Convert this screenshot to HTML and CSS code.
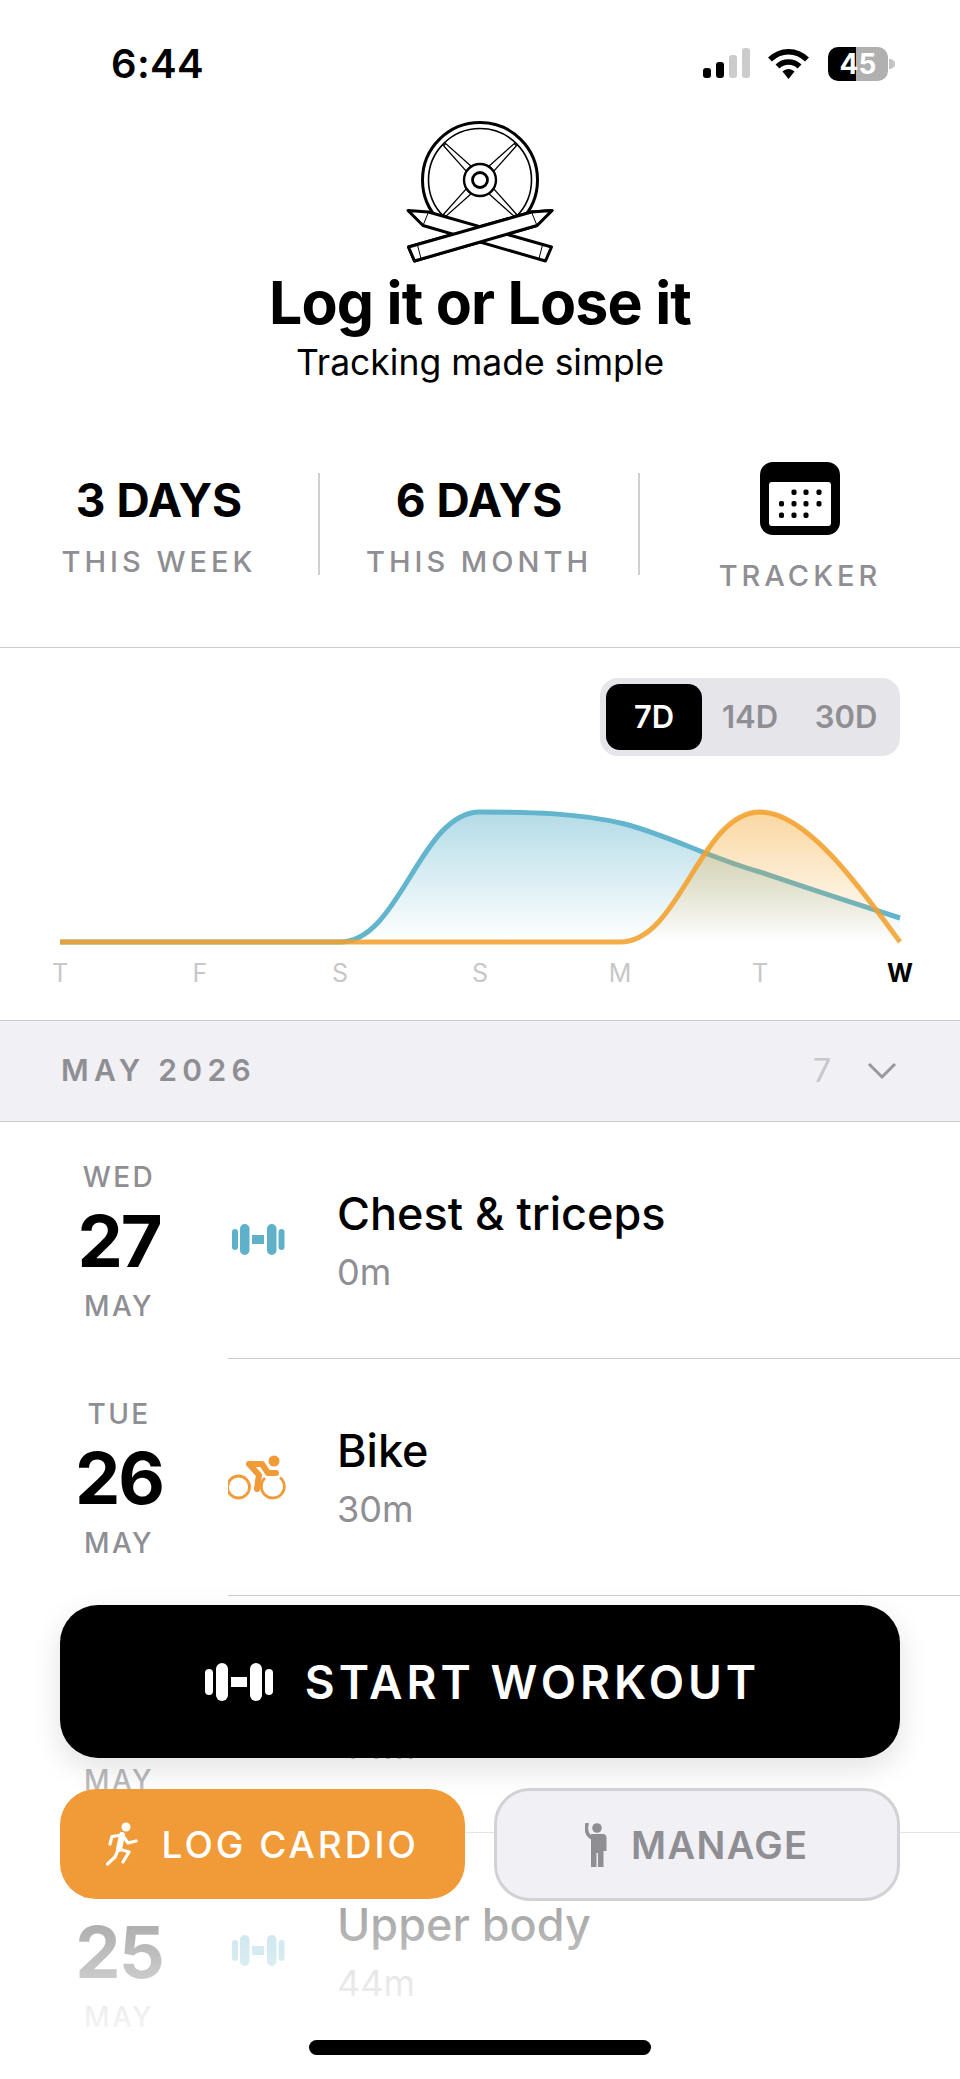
FILE: index.html
```html
<!DOCTYPE html>
<html lang="en">
  <head>
    <meta charset="UTF-8" />
    <meta name="viewport" content="width=device-width, initial-scale=1.0" />
    <title>Log it or Lose it</title>
    <link rel="stylesheet" href="styles.css">
  </head>
  <body>
    <div class="screen">
      <div class="status">
        <div class="time">6:44</div>
        <div class="status-icons">
          <svg class="signal" width="47" height="30" viewBox="0 0 47 30">
            <rect x="0" y="20" width="8" height="10" rx="3" fill="#000" />
            <rect x="13" y="14" width="8" height="16" rx="3" fill="#000" />
            <rect x="26" y="7" width="8" height="23" rx="3" fill="#ccc" />
            <rect x="39" y="0" width="8" height="30" rx="3" fill="#ccc" />
          </svg>
          <svg class="wifi" width="41" height="31" viewBox="0 0 41 31">
            <path d="M2 11.5C12.5 1 28.500 1 39 11.500" fill="none" stroke="#000" stroke-width="5.500" />
            <path d="M9.500 18.500C15.500 12.500 25.500 12.500 31.500 18.500" fill="none" stroke="#000" stroke-width="5.500" />
            <path d="M14.500 23.500C18 20 23 20 26.500 23.500L20.500 31Z" fill="#000" />
          </svg>
          <div class="battery">
            <div class="battery-body">45</div>
            <div class="battery-nub"></div>
          </div>
        </div>
      </div>

      <div class="brand">
        <svg class="logo" width="200" height="160" viewBox="0 0 200 160">
          <g fill="#fff" stroke="#000">
            <circle cx="100" cy="70" r="57.500" stroke-width="3" />
            <circle cx="100" cy="70" r="51.500" stroke-width="1.600" />
            <g transform="translate(100 70)" stroke-width="1.300">
              <polygon points="-1.500,-50 1.500,-50 3.500,-16 -3.500,-16" transform="rotate(45)" />
              <polygon points="-1.500,-50 1.500,-50 3.500,-16 -3.500,-16" transform="rotate(135)" />
              <polygon points="-1.500,-50 1.500,-50 3.500,-16 -3.500,-16" transform="rotate(225)" />
              <polygon points="-1.500,-50 1.500,-50 3.500,-16 -3.500,-16" transform="rotate(315)" />
            </g>
            <circle cx="100" cy="70" r="16" stroke-width="2.400" />
            <circle cx="100" cy="70" r="7.500" stroke-width="2.800" />
            <g id="pencil" stroke-linejoin="round">
              <path d="M28.500 137L34.500 151L157 115.500L172 100.500L151.500 102Z" stroke-width="3" />
              <path d="M37.500 135L41 148.500M151.500 102L157 115.500" fill="none" stroke-width="1" />
            </g>
            <use href="#pencil" transform="matrix(-1 0 0 1 200 0)" />
            <use href="#pencil" />
          </g>
        </svg>
        <h1>Log it or Lose it</h1>
        <p>Tracking made simple</p>
      </div>

      <div class="stats">
        <div class="stat stat-line">
          <div class="stat-value">3 DAYS</div>
          <div class="stat-label">THIS WEEK</div>
        </div>
        <div class="stat stat-line">
          <div class="stat-value">6 DAYS</div>
          <div class="stat-label">THIS MONTH</div>
        </div>
        <div class="tracker">
          <svg width="80" height="73" viewBox="0 0 80 73">
            <rect x="0" y="0" width="80" height="73" rx="13" fill="#000" />
            <rect x="9" y="20" width="62" height="44" rx="3" fill="#fff" />
            <g fill="#000">
              <rect x="31.500" y="27.500" width="5" height="5.500" rx="1.800" />
              <rect x="43.500" y="27.500" width="5" height="5.500" rx="1.800" />
              <rect x="56.500" y="27.500" width="5" height="5.500" rx="1.800" />
              <rect x="19" y="39" width="5" height="5.500" rx="1.800" />
              <rect x="31.500" y="39" width="5" height="5.500" rx="1.800" />
              <rect x="43.500" y="39" width="5" height="5.500" rx="1.800" />
              <rect x="56.500" y="39" width="5" height="5.500" rx="1.800" />
              <rect x="19" y="50.500" width="5" height="5.500" rx="1.800" />
              <rect x="31.500" y="50.500" width="5" height="5.500" rx="1.800" />
              <rect x="43.500" y="50.500" width="5" height="5.500" rx="1.800" />
            </g>
          </svg>
          <div class="stat-label">TRACKER</div>
        </div>
      </div>

      <div class="chart">
        <div class="range">
          <div class="range-item range-on">7D</div>
          <div class="range-item">14D</div>
          <div class="range-item">30D</div>
        </div>
        <svg class="curves" width="960" height="150" viewBox="0 800 960 150">
          <defs>
            <linearGradient id="blueFill" x1="0" y1="812" x2="0" y2="942" gradientUnits="userSpaceOnUse">
              <stop offset="0" stop-color="#62b5cd" stop-opacity="0.48" />
              <stop offset="1" stop-color="#62b5cd" stop-opacity="0" />
            </linearGradient>
            <linearGradient id="orangeFill" x1="0" y1="812" x2="0" y2="942" gradientUnits="userSpaceOnUse">
              <stop offset="0" stop-color="#f2a020" stop-opacity="0.42" />
              <stop offset="1" stop-color="#f2a020" stop-opacity="0" />
            </linearGradient>
          </defs>
          <path d="M60 942L340 942C400 942 420 812 480 812C530 812 580 813 625 824C670 836 710 858 760 872C807 888 853 903 900 918L900 942Z" fill="url(#blueFill)" />
          <path d="M60 942L340 942C400 942 420 812 480 812C530 812 580 813 625 824C670 836 710 858 760 872C807 888 853 903 900 918" fill="none" stroke="#62b5cd" stroke-width="5" />
          <path d="M620 942C680 942 700 812 760 812C807 812 862 890 900 942Z" fill="url(#orangeFill)" />
          <path d="M60 942L620 942C680 942 700 812 760 812C807 812 862 890 900 942" fill="none" stroke="#f2a02e" stroke-width="5" stroke-opacity="0.88" />
        </svg>
        <div class="days">
          <span>T</span>
          <span>F</span>
          <span>S</span>
          <span>S</span>
          <span>M</span>
          <span>T</span>
          <span class="today">W</span>
        </div>
      </div>

      <div class="month">
        <div class="month-name">MAY 2026</div>
        <div class="month-count">7</div>
        <svg width="30" height="19" viewBox="0 0 30 19">
          <path d="M2 3L15 16L28 3" fill="none" stroke="#98989d" stroke-width="3" />
        </svg>
      </div>

      <div class="row">
        <div class="day">
          <div class="day-name">WED</div>
          <div class="day-num">27</div>
          <div class="day-name">MAY</div>
        </div>
        <div class="row-main">
          <svg class="row-icon" width="60" height="40" viewBox="0 0 60 40">
            <g fill="#5fb1c9">
              <rect x="4" y="9" width="6" height="21" rx="3" />
              <rect x="12" y="4" width="9.500" height="31" rx="4.700" />
              <rect x="24" y="15" width="12" height="9" />
              <rect x="39" y="4" width="9.500" height="31" rx="4.700" />
              <rect x="50.500" y="9" width="6" height="21" rx="3" />
            </g>
          </svg>
          <div class="row-text">
            <div class="row-title">Chest &amp; triceps</div>
            <div class="row-sub">0m</div>
          </div>
        </div>
      </div>

      <div class="row">
        <div class="day">
          <div class="day-name">TUE</div>
          <div class="day-num">26</div>
          <div class="day-name">MAY</div>
        </div>
        <div class="row-main">
          <svg class="row-icon" width="60" height="64" viewBox="8 0 60 64">
            <g fill="none" stroke="#f09a38" stroke-width="2.800">
              <circle cx="18.500" cy="42" r="11" />
              <path d="M45 33A11.500 11.500 0 1 0 60 32.500" />
            </g>
            <circle cx="54" cy="16" r="5.500" fill="#f09a38" />
            <path d="M29 19L42 19L48 28L56 28M29 19L39 30L37 44" fill="none" stroke="#f09a38" stroke-width="6" stroke-linejoin="round" stroke-linecap="round" />
          </svg>
          <div class="row-text">
            <div class="row-title">Bike</div>
            <div class="row-sub">30m</div>
          </div>
        </div>
      </div>

      <div class="row">
        <div class="day">
          <div class="day-name">TUE</div>
          <div class="day-num">26</div>
          <div class="day-name">MAY</div>
        </div>
        <div class="row-main">
          <div class="row-icon"></div>
          <div class="row-text">
            <div class="row-title">Walk</div>
            <div class="row-sub">44m</div>
          </div>
        </div>
      </div>

      <div class="row">
        <div class="day">
          <div class="day-name">MON</div>
          <div class="day-num">25</div>
          <div class="day-name">MAY</div>
        </div>
        <div class="row-main">
          <svg class="row-icon" width="60" height="40" viewBox="0 0 60 40">
            <g fill="#5fb1c9">
              <rect x="4" y="9" width="6" height="21" rx="3" />
              <rect x="12" y="4" width="9.500" height="31" rx="4.700" />
              <rect x="24" y="15" width="12" height="9" />
              <rect x="39" y="4" width="9.500" height="31" rx="4.700" />
              <rect x="50.500" y="9" width="6" height="21" rx="3" />
            </g>
          </svg>
          <div class="row-text">
            <div class="row-title">Upper body</div>
            <div class="row-sub">44m</div>
          </div>
        </div>
      </div>

      <div class="fade"></div>

      <div class="actions">
        <button class="btn-start">
          <svg width="68" height="38" viewBox="0 0 68 38">
            <g fill="#fff">
              <rect x="0" y="6" width="8" height="26" rx="4" />
              <rect x="11" y="0" width="12" height="38" rx="6" />
              <rect x="26" y="14" width="16" height="10" />
              <rect x="45" y="0" width="12" height="38" rx="6" />
              <rect x="60" y="6" width="8" height="26" rx="4" />
            </g>
          </svg>
          START WORKOUT
        </button>
        <div class="actions-row">
          <button class="btn-cardio">
            <svg width="32" height="44" viewBox="0 0 32 44">
              <circle cx="20" cy="5" r="4.500" fill="#fff" />
              <g fill="none" stroke="#fff" stroke-linejoin="round" stroke-linecap="round">
                <path d="M16 13L13 27" stroke-width="6" />
                <path d="M16 13L6 14.500L4 22M17 14L22 21L30 19M13 27L23 30L17 40M12 28L9 35L1.500 42" stroke-width="3.200" />
              </g>
            </svg>
            LOG CARDIO
          </button>
          <button class="btn-manage">
            <svg width="24" height="44" viewBox="0 0 24 44">
              <circle cx="12" cy="5" r="4.800" fill="#8e8e93" />
              <path d="M2 1C0.500 7 2 12 7 15" fill="none" stroke="#8e8e93" stroke-width="3.500" stroke-linecap="round" />
              <path d="M6 11H18C20 11 21.500 12.500 21.500 14.500V28H18.500V44H13V30H11.500V44H6Z" fill="#8e8e93" />
            </svg>
            MANAGE
          </button>
        </div>
      </div>

      <div class="home-bar"></div>
    </div>
  </body>
</html>
```

FILE: styles.css
```css
* {
  margin: 0;
  padding: 0;
  box-sizing: border-box;
  font-family: Inter, "Liberation Sans", sans-serif;
}

body {
  background-color: #ffffff;
  color: #000000;
}

.screen {
  width: 960px;
  height: 2079px;
  position: relative;
  overflow: hidden;
}

/* status bar */
.status {
  height: 110px;
  padding: 40px 65px 0 111px;
  display: flex;
  justify-content: space-between;
  align-items: flex-start;
}

.time {
  font-size: 40px;
  line-height: 48px;
  font-weight: 600;
  letter-spacing: 0.3px;
}

.status-icons {
  display: flex;
  align-items: flex-start;
  padding-top: 7px;
}

.signal {
  margin: 1px 18px 0 0;
}

.wifi {
  margin: 1px 19px 0 0;
}

.battery {
  display: flex;
  align-items: center;
}

.battery-body {
  width: 60px;
  height: 34px;
  border-radius: 10px;
  background: linear-gradient(90deg, #000000 0, #000000 28px, #b0b0b0 28px, #b0b0b0 100%);
  color: #ffffff;
  font-size: 28px;
  font-weight: 700;
  line-height: 34px;
  text-align: center;
}

.battery-nub {
  width: 6px;
  height: 10px;
  background: #c4c4c4;
  border-radius: 0 5px 5px 0;
  margin-left: 1px;
}

/* header */
.brand {
  text-align: center;
}

.logo {
  display: block;
  margin: 0 auto;
}

h1 {
  font-size: 59px;
  line-height: 64px;
  font-weight: 700;
  letter-spacing: -0.8px;
  margin-top: 1px;
}

.brand p {
  font-size: 35.500px;
  line-height: 40px;
  margin-top: 8px;
}

/* stats */
.stats {
  display: grid;
  grid-template-columns: repeat(3, 320px);
  height: 188px;
  margin-top: 77px;
  border-bottom: 1px solid #cccccc;
}

.stat {
  height: 102px;
  margin-top: 13px;
  text-align: center;
}

.stat-line {
  border-right: 2px solid #d0d0d0;
}

.stat-value {
  font-size: 46px;
  line-height: 48px;
  font-weight: 700;
  padding-top: 3px;
}

.stat-label {
  font-size: 29px;
  line-height: 36px;
  font-weight: 500;
  letter-spacing: 4px;
  color: #8e8e93;
  margin-top: 20px;
}

.tracker {
  display: flex;
  flex-direction: column;
  align-items: center;
  text-align: center;
}

.tracker svg {
  display: block;
  margin-top: 2px;
}

.tracker .stat-label {
  margin-top: 23px;
}

/* chart */
.chart {
  height: 373px;
  padding-top: 30px;
  border-bottom: 1px solid #cccccc;
}

.range {
  width: 300px;
  height: 78px;
  margin-left: 600px;
  padding: 6px;
  background: #e5e5ea;
  border-radius: 18px;
  display: flex;
}

.range-item {
  flex: 1;
  font-size: 31px;
  font-weight: 600;
  line-height: 66px;
  text-align: center;
  color: #8e8e93;
  border-radius: 14px;
}

.range-on {
  background: #000000;
  color: #ffffff;
}

.curves {
  display: block;
  margin-top: 44px;
}

.days {
  display: grid;
  grid-template-columns: repeat(7, 140px);
  margin: 8px 0 0 -10px;
  font-size: 25px;
  line-height: 30px;
  text-align: center;
  color: #c7c7c7;
}

.today {
  font-weight: 700;
  color: #000000;
}

/* month band */
.month {
  height: 101px;
  background: #f0f0f5;
  border-bottom: 1px solid #cccccc;
  padding: 0 63px 2px 61px;
  display: flex;
  align-items: center;
}

.month-name {
  font-size: 30px;
  font-weight: 600;
  letter-spacing: 5.300px;
  color: #8e8e93;
  flex: 1;
}

.month-count {
  font-size: 32px;
  color: #c7c7cc;
  margin-right: 36px;
}

/* rows */
.row {
  height: 237px;
  display: flex;
}

.day {
  width: 118px;
  margin-left: 60px;
  padding-top: 38px;
  text-align: center;
  flex-shrink: 0;
}

.day-name {
  font-size: 28px;
  line-height: 34px;
  font-weight: 500;
  letter-spacing: 2.400px;
  color: #8e8e93;
}

.day-num {
  font-size: 72px;
  line-height: 84px;
  font-weight: 700;
  letter-spacing: -2px;
  margin: 5px 0 6px;
}

.row-main {
  flex: 1;
  margin-left: 50px;
  display: flex;
  align-items: center;
  border-bottom: 1px solid #cccccc;
}

.row-icon {
  width: 60px;
  flex-shrink: 0;
}

.row-text {
  margin-left: 49px;
}

.row-title {
  font-size: 45px;
  line-height: 52px;
  font-weight: 500;
}

.row-sub {
  font-size: 36px;
  line-height: 40px;
  color: #8e8e93;
  margin-top: 12px;
}

/* overlays */
.fade {
  position: absolute;
  left: 0;
  right: 0;
  top: 1590px;
  bottom: 0;
  background: linear-gradient(180deg, rgba(255, 255, 255, 0) 0%, #ffffff 100%);
}

.actions {
  position: absolute;
  left: 60px;
  top: 1605px;
  width: 840px;
}

.actions button {
  border: none;
  display: flex;
  align-items: center;
  justify-content: center;
}

.btn-start {
  width: 100%;
  height: 153px;
  padding-left: 5px;
  background: #000000;
  color: #ffffff;
  border-radius: 38px;
  font-size: 46px;
  font-weight: 600;
  letter-spacing: 4px;
  gap: 32px;
  box-shadow: 0 10px 30px rgba(0, 0, 0, 0.12);
}

.actions-row {
  display: flex;
  gap: 29px;
  margin-top: 30px;
}

.btn-cardio {
  width: 405px;
  height: 110px;
  margin-top: 1px;
  background: #f09a38;
  color: #ffffff;
  border-radius: 36px;
  font-size: 37px;
  font-weight: 500;
  letter-spacing: 3px;
  gap: 24px;
}

.actions .btn-manage {
  width: 407px;
  height: 113px;
  background: #f0f0f5;
  color: #8e8e93;
  border: 3px solid #d1d1d6;
  border-radius: 36px;
  font-size: 38px;
  font-weight: 600;
  letter-spacing: 1.400px;
  gap: 22px;
}

.home-bar {
  position: absolute;
  left: 309px;
  top: 2040px;
  width: 342px;
  height: 15px;
  background: #000000;
  border-radius: 8px;
}
```
